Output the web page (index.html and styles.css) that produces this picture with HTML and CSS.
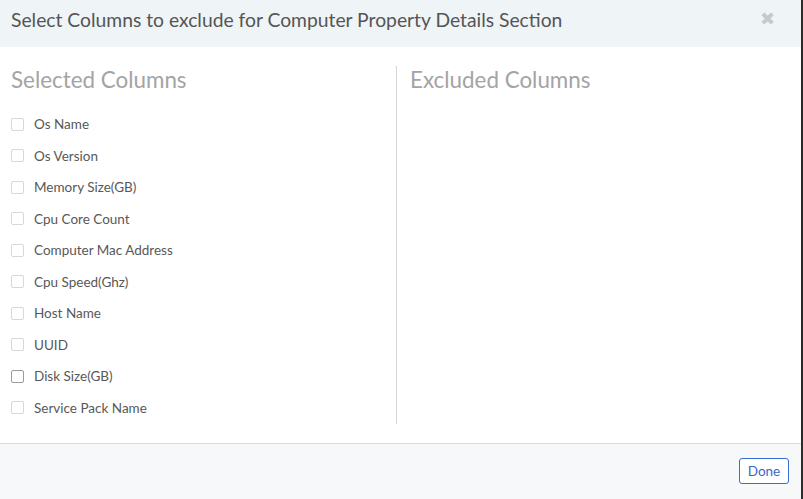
FILE: index.html
```html
<!DOCTYPE html>
<html>
<head>
<meta charset="utf-8">
<link rel="stylesheet" href="styles.css">
</head>
<body>
<div class="modal">
  <div class="modal-header">
    <h1 class="title">Select Columns to exclude for Computer Property Details Section</h1>
    <span class="close">&#x2716;</span>
  </div>
  <div class="modal-body">
    <div class="col col-left">
      <h2 class="col-title">Selected Columns</h2>
      <ul class="list">
        <li class="item"><span class="box"></span>Os Name</li>
        <li class="item"><span class="box"></span>Os Version</li>
        <li class="item"><span class="box"></span>Memory Size(GB)</li>
        <li class="item"><span class="box"></span>Cpu Core Count</li>
        <li class="item"><span class="box"></span>Computer Mac Address</li>
        <li class="item"><span class="box"></span>Cpu Speed(Ghz)</li>
        <li class="item"><span class="box"></span>Host Name</li>
        <li class="item"><span class="box"></span>UUID</li>
        <li class="item"><span class="box box-hover"></span>Disk Size(GB)</li>
        <li class="item"><span class="box"></span>Service Pack Name</li>
      </ul>
    </div>
    <div class="col col-right">
      <h2 class="col-title">Excluded Columns</h2>
    </div>
  </div>
  <div class="modal-footer">
    <button class="btn">Done</button>
  </div>
</div>
</body>
</html>
```
FILE: styles.css
```css
html, body {
  margin: 0;
  padding: 0;
  height: 100%;
  background: #2b2b2b;
}
body {
  font-family: "Lato", "Open Sans", sans-serif;
}
.modal {
  width: 801px;
  height: 499px;
  background: #fff;
  display: flex;
  flex-direction: column;
}
.modal-header {
  height: 47px;
  background: #eff4f7;
  display: flex;
  align-items: center;
  justify-content: space-between;
  padding: 0 26px 0 11px;
  box-sizing: border-box;
}
.title {
  margin: 0;
  font-size: 19.3px;
  font-weight: 400;
  color: #555;
  line-height: 1;
  position: relative;
  top: -4px;
}
.close {
  color: #c6c9cb;
  font-size: 18px;
  line-height: 1;
  position: relative;
  top: -4px;
  font-family: "DejaVu Sans", sans-serif;
}
.modal-body {
  flex: 1;
  display: flex;
  padding: 19px 11px 19px 11px;
}
.col {
  flex: 1;
}
.col-left {
  border-right: 1px solid #d6d6d6;
  flex: 0 0 385px;
}
.col-right {
  padding-left: 13px;
}
.col-title {
  margin: 0;
  font-size: 22.4px;
  font-weight: 400;
  color: #a4a4a4;
  line-height: 28px;
}
.list {
  list-style: none;
  margin: 15px 0 0 0;
  padding: 0;
}
.item {
  display: flex;
  align-items: center;
  height: 31.5px;
  font-size: 13.5px;
  color: #585858;
}
.box {
  width: 11px;
  height: 11px;
  border: 1px solid #d8d8d8;
  border-radius: 2px;
  margin-right: 10px;
  flex: none;
}
.box-hover {
  border-color: #9a9a9a;
}
.modal-footer {
  height: 57px;
  border-top: 1px solid #dcdcdc;
  background: #f7f8fa;
  display: flex;
  justify-content: flex-end;
  align-items: center;
  padding-right: 12px;
  box-sizing: border-box;
}
.btn {
  font-family: "Lato", "Open Sans", sans-serif;
  font-size: 13.5px;
  color: #3767c8;
  background: #fff;
  border: 1px solid #3a6dd4;
  border-radius: 3px;
  width: 50px;
  height: 26px;
  padding: 0;
}
```
